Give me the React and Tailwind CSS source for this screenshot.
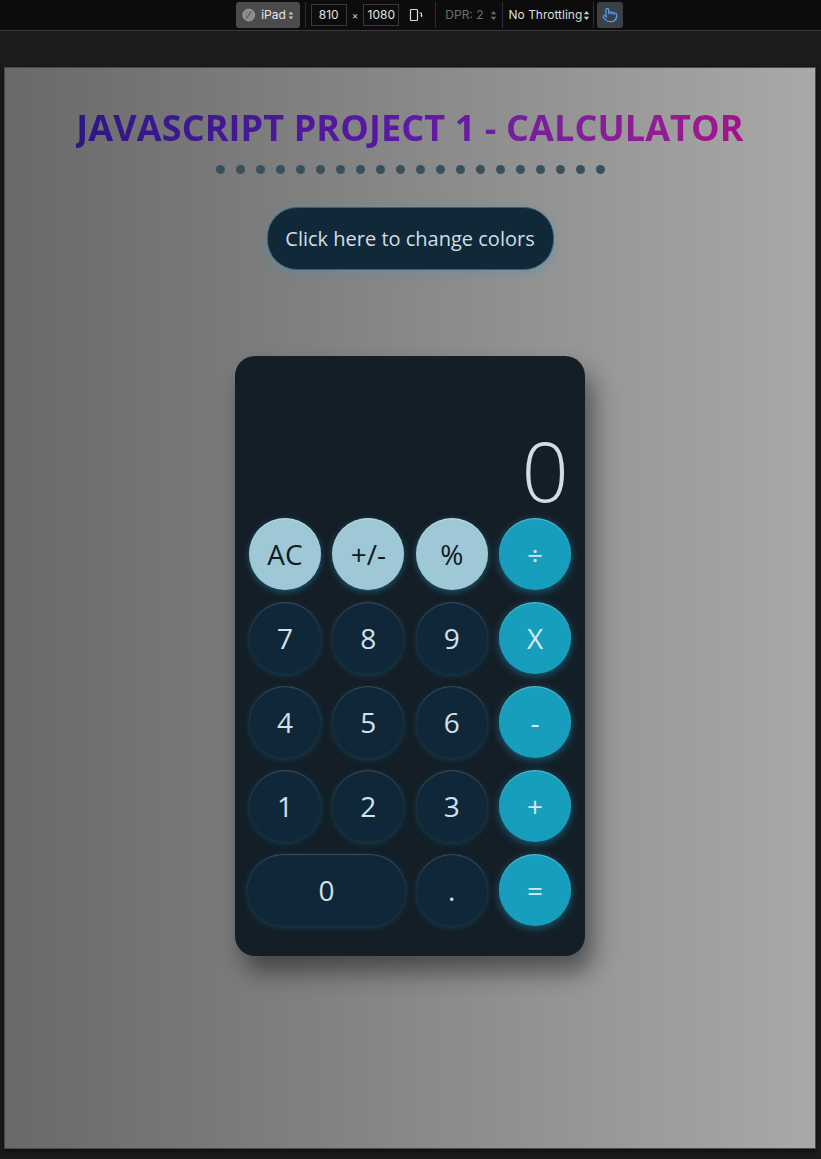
import React from "react";

function UpDown({ className = "" }) {
  return (
    <svg width="7" height="11" viewBox="0 0 7 11" className={className}>
      <path d="M3.5 1 L6.2 4.2 H0.8 Z" fill="currentColor" />
      <path d="M3.5 10 L6.2 6.8 H0.8 Z" fill="currentColor" />
    </svg>
  );
}

function Toolbar() {
  return (
    <div className="h-[31px] bg-[#0c0c0d] border-b border-[#3a3a3c] flex items-center justify-center text-[12px] text-[#dcdcdc] [font-family:Inter,'Liberation_Sans',sans-serif]">
      <div className="flex items-center h-full ml-[38px]">
        <div className="h-[26px] w-[64px] rounded-[3px] bg-[#4b4b4d] flex items-center px-[6px] gap-[6px]">
          <svg width="16" height="16" viewBox="0 0 16 16">
            <circle cx="8" cy="8" r="7" fill="#8a8a8a" stroke="#a8a8a8" strokeWidth="1" />
            <path d="M11 4 L5 12" stroke="#5e5e5e" strokeWidth="1.4" />
          </svg>
          <span className="text-[#e6e6e6]">iPad</span>
          <UpDown className="text-[#cfcfcf] -ml-[4px]" />
        </div>
        <div className="w-px h-[26px] bg-[#2e2e30] mx-[5px]" />
        <div className="h-[22px] w-[36px] border border-[#3a3a3c] flex items-center justify-center text-[#e2e2e2]">810</div>
        <span className="mx-[5px] text-[10px] text-[#cfcfcf]">×</span>
        <div className="h-[22px] w-[36px] border border-[#3a3a3c] flex items-center justify-center text-[#e2e2e2]">1080</div>
        <svg width="16" height="16" viewBox="0 0 16 16" className="ml-[9px]">
          <rect x="2.5" y="2.5" width="7" height="11" rx="1" fill="none" stroke="#dcdcdc" strokeWidth="1.2" />
          <path d="M11.5 6 h2 v3" fill="none" stroke="#dcdcdc" strokeWidth="1" />
          <path d="M12 8.5 L13.5 10.3 L15 8.5 Z" fill="#dcdcdc" />
        </svg>
        <div className="w-px h-[26px] bg-[#2e2e30] ml-[11px] mr-[9px]" />
        <span className="text-[#6c6c6e]">DPR: 2</span>
        <UpDown className="text-[#6c6c6e] ml-[6px]" />
        <div className="w-px h-[26px] bg-[#2e2e30] ml-[5px] mr-[6px]" />
        <span>No Throttling</span>
        <UpDown className="text-[#cfcfcf] ml-[1px]" />
        <div className="w-px h-[26px] bg-[#2e2e30] ml-[3px] mr-[3px]" />
        <div className="h-[26px] w-[26px] rounded-[3px] bg-[#3b3f46] flex items-center justify-center">
          <svg width="16" height="18" viewBox="0 0 24 24" fill="none" stroke="#4f9df5" strokeWidth="1.8" strokeLinecap="round" strokeLinejoin="round">
            <path d="M22 14a8 8 0 0 1-8 8" />
            <path d="M18 11v-1a2 2 0 0 0-2-2a2 2 0 0 0-2 2" />
            <path d="M14 10V9a2 2 0 0 0-2-2a2 2 0 0 0-2 2v1" />
            <path d="M10 9.5V4a2 2 0 0 0-2-2a2 2 0 0 0-2 2v10" />
            <path d="M18 11a2 2 0 1 1 4 0v3a8 8 0 0 1-8 8h-2c-2.8 0-4.5-.86-5.990-2.34l-3.6-3.6a2 2 0 0 1 2.83-2.82L7 15" />
          </svg>
        </div>
      </div>
    </div>
  );
}

const keys = [
  { l: "AC", t: "light" },
  { l: "+/-", t: "light" },
  { l: "%", t: "light" },
  { l: "÷", t: "op" },
  { l: "7", t: "num" },
  { l: "8", t: "num" },
  { l: "9", t: "num" },
  { l: "X", t: "op" },
  { l: "4", t: "num" },
  { l: "5", t: "num" },
  { l: "6", t: "num" },
  { l: "-", t: "op" },
  { l: "1", t: "num" },
  { l: "2", t: "num" },
  { l: "3", t: "num" },
  { l: "+", t: "op" },
  { l: "0", t: "num", wide: true },
  { l: ".", t: "num" },
  { l: "=", t: "op" },
];

function Key({ k }) {
  const base =
    "h-[72px] rounded-full flex items-center justify-center text-[28px] font-normal leading-none";
  let cls = "";
  if (k.t === "light")
    cls =
      "bg-[#9ec8d6] text-[#0e1b23] shadow-[inset_0_1px_1px_rgba(255,255,255,0.35),0_2px_6px_rgba(40,160,200,0.45)]";
  else if (k.t === "op")
    cls =
      "bg-[#179ebd] text-[#d6e7ee] shadow-[inset_0_1px_1px_rgba(255,255,255,0.3),0_2px_8px_rgba(30,160,200,0.5)]";
  else
    cls =
      "bg-[#10273a] text-[#d3e1e9] shadow-[inset_0_1px_1px_rgba(255,255,255,0.18),0_2px_6px_rgba(20,110,140,0.4)]";
  return (
    <div className={`${base} ${cls} ${k.wide ? "col-span-2 -mx-[2px]" : "w-[72px]"}`}>
      {k.l}
    </div>
  );
}

export default function App() {
  return (
    <div className="min-h-[1159px] bg-[#1c1c1e] [font-family:'Open_Sans',sans-serif]">
      <Toolbar />
      <div className="pt-[36px] pl-[4px]">
        <div className="w-[812px] h-[1082px] border border-[#4a4a4c] shadow-[0_2px_6px_rgba(0,0,0,0.6)]">
          <div className="w-full h-full bg-gradient-to-r from-[#696969] to-[#a9a9a9] flex flex-col items-center">
            <h1 className="mt-[38px] text-[36px] font-bold leading-[44px] tracking-[0.1px] bg-gradient-to-r from-[#2c1686] via-[#5e18a6] to-[#a5118a] bg-clip-text text-transparent [font-family:'Open_Sans',sans-serif]">
              JAVASCRIPT PROJECT 1 - CALCULATOR
            </h1>
            <div className="mt-[15px] flex gap-[11px]">
              {Array.from({ length: 20 }).map((_, i) => (
                <div key={i} className="w-[9px] h-[9px] rounded-full bg-[#37505c]" />
              ))}
            </div>
            <button className="mt-[33px] w-[287px] h-[63px] rounded-[30px] bg-[#112838] text-[#d2dee6] text-[20px] border border-[#3e5f70] shadow-[0_2px_8px_rgba(60,150,190,0.45)]">
              Click here to change colors
            </button>
            <div className="mt-[86px] w-[350px] h-[600px] rounded-[20px] bg-[#141e27] shadow-[8px_16px_24px_rgba(0,0,0,0.45)] px-[14px] pb-[30px] flex flex-col">
              <div className="flex-1 flex items-end justify-end pr-[2px] pb-[7px]">
                <span className="text-[83px] font-light leading-none text-[#cfdde6]">0</span>
              </div>
              <div className="grid grid-cols-4 gap-x-[11.5px] gap-y-[12px]">
                {keys.map((k, i) => (
                  <Key key={i} k={k} />
                ))}
              </div>
            </div>
          </div>
        </div>
      </div>
    </div>
  );
}
